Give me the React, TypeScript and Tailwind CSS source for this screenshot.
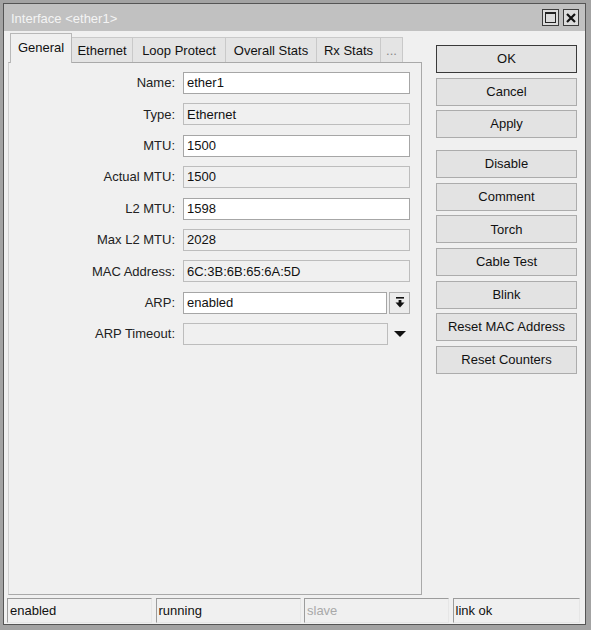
import React from "react";

const font = "font-['Liberation_Sans',Arial,sans-serif]";

type Field = { label: string; value: string; editable: boolean; kind?: "select" | "dropdown" };

const fields: Field[] = [
  { label: "Name:", value: "ether1", editable: true },
  { label: "Type:", value: "Ethernet", editable: false },
  { label: "MTU:", value: "1500", editable: true },
  { label: "Actual MTU:", value: "1500", editable: false },
  { label: "L2 MTU:", value: "1598", editable: true },
  { label: "Max L2 MTU:", value: "2028", editable: false },
  { label: "MAC Address:", value: "6C:3B:6B:65:6A:5D", editable: false },
  { label: "ARP:", value: "enabled", editable: true, kind: "select" },
  { label: "ARP Timeout:", value: "", editable: false, kind: "dropdown" },
];

const tabs = [
  { name: "General", w: "w-[62px]" },
  { name: "Ethernet", w: "w-[61px]" },
  { name: "Loop Protect", w: "w-[93px]" },
  { name: "Overall Stats", w: "w-[91px]" },
  { name: "Rx Stats", w: "w-[64px]" },
  { name: "...", w: "w-[22px]" },
];

const buttons1 = ["OK", "Cancel", "Apply"];
const buttons2 = ["Disable", "Comment", "Torch", "Cable Test", "Blink", "Reset MAC Address", "Reset Counters"];

function Btn({ label, primary }: { label: string; primary?: boolean }) {
  return (
    <div
      className={
        "h-[28px] w-[141px] flex items-center justify-center bg-[#e3e3e3] text-[#111] border " +
        (primary ? "border-[#3a3a3a]" : "border-[#acacac]")
      }
    >
      {label}
    </div>
  );
}

function Input({ value, editable, w }: { value: string; editable: boolean; w: string }) {
  return (
    <div
      className={
        "h-[22px] " +
        w +
        " flex items-center pl-[3px] border text-[#111] " +
        (editable ? "bg-white border-[#a6a6a6]" : "bg-[#f0f0f0] border-[#bdbdbd]")
      }
    >
      {value}
    </div>
  );
}

export default function App() {
  return (
    <div className={"w-[591px] h-[630px] bg-[#a3a3a3] pt-[3px] pl-[3px] pr-[5px] pb-[5px] text-[13px] " + font}>
      <div className="h-full border border-[#555555] flex flex-col bg-[#f0f0f0]">
        {/* Title bar */}
        <div className="h-[27px] bg-[#c1c1c1] flex items-center pl-[7px] pr-[6px]">
          <span className="text-[#f4f4f4] flex-1 pt-[2px]">Interface &lt;ether1&gt;</span>
          <div className="flex gap-[4px] items-center">
            <div className="w-[17px] h-[17px] border border-[#3c3c3c] bg-[#dcdcdc] flex items-center justify-center">
              <svg width="11" height="11" viewBox="0 0 11 11">
                <rect x="0.5" y="0.5" width="10" height="10" fill="none" stroke="#222" strokeWidth="1" />
                <rect x="0" y="0" width="11" height="2" fill="#222" />
              </svg>
            </div>
            <div className="w-[16px] h-[17px] border border-[#3c3c3c] bg-[#dcdcdc] flex items-center justify-center">
              <svg width="10" height="10" viewBox="0 0 10 10">
                <path d="M1 1 L9 9 M9 1 L1 9" stroke="#111" strokeWidth="2.2" />
              </svg>
            </div>
          </div>
        </div>

        {/* Body */}
        <div className="flex-1 flex flex-col pt-[2px]">
          <div className="flex-1 flex pl-[4px]">
            {/* Left tab area */}
            <div className="w-[414px] flex flex-col">
              <div className="h-[29px] flex items-end pl-[2px] relative z-10">
                {tabs.map((t, i) =>
                  i === 0 ? (
                    <div
                      key={t.name}
                      className={
                        t.w +
                        " h-[30px] -mb-[1px] bg-[#f0f0f0] border-l border-t border-r border-[#b8b8b8] flex items-center justify-center text-[#111] pb-[1px]"
                      }
                    >
                      {t.name}
                    </div>
                  ) : (
                    <div
                      key={t.name}
                      className={
                        t.w +
                        " h-[25px] bg-[#e4e4e4] border-t border-r border-[#c9c9c9] flex items-center justify-center pt-[2px] " +
                        (t.name === "..." ? "text-[#888]" : "text-[#111]")
                      }
                    >
                      {t.name}
                    </div>
                  )
                )}
              </div>
              <div className="flex-1 border border-[#a9a9a9] border-l-[#d0d0d0] bg-[#f0f0f0] pt-[9px] flex flex-col gap-[9.4px]">
                {fields.map((f) => (
                  <div key={f.label} className="flex items-center h-[22px]">
                    <div className="w-[167px] text-right text-[#222] pr-[1px]">{f.label}</div>
                    <div className="ml-[7px] flex items-center">
                      {f.kind === "select" ? (
                        <>
                          <Input value={f.value} editable={true} w="w-[204px]" />
                          <div className="ml-[2px] w-[21px] h-[22px] border border-[#b0b0b0] bg-[#ececec] flex items-center justify-center">
                            <svg width="10" height="11" viewBox="0 0 10 11">
                              <rect x="1" y="0" width="8" height="1.6" fill="#111" />
                              <rect x="3.6" y="3" width="2.8" height="3" fill="#111" />
                              <polygon points="0.5,5.5 9.5,5.5 5,10.5" fill="#111" />
                            </svg>
                          </div>
                        </>
                      ) : f.kind === "dropdown" ? (
                        <>
                          <Input value="" editable={false} w="w-[205px]" />
                          <div className="ml-[1px] w-[21px] h-[22px] flex items-center justify-center">
                            <svg width="12" height="6" viewBox="0 0 12 6">
                              <polygon points="0,0 12,0 6,6" fill="#111" />
                            </svg>
                          </div>
                        </>
                      ) : (
                        <Input value={f.value} editable={f.editable} w="w-[227px]" />
                      )}
                    </div>
                  </div>
                ))}
              </div>
            </div>

            {/* Right buttons */}
            <div className="ml-[14px] pt-[12px] flex flex-col">
              <div className="flex flex-col gap-[4.6px]">
                {buttons1.map((b, i) => (
                  <Btn key={b} label={b} primary={i === 0} />
                ))}
              </div>
              <div className="mt-[12px] flex flex-col gap-[4.6px]">
                {buttons2.map((b) => (
                  <Btn key={b} label={b} />
                ))}
              </div>
            </div>
          </div>

          {/* Status bar */}
          <div className="h-[25px] mt-[3px] mb-[1px] flex gap-[3.5px] pl-[3px] pr-[5px]">
            {[
              { t: "enabled", c: "text-[#111]", w: "w-[145px]" },
              { t: "running", c: "text-[#111]", w: "w-[145px]" },
              { t: "slave", c: "text-[#a9a9a9]", w: "w-[145px]" },
              { t: "link ok", c: "text-[#111]", w: "flex-1" },
            ].map((s) => (
              <div
                key={s.t}
                className={
                  s.w +
                  " h-full border-l border-t border-[#9c9c9c] border-r border-r-[#e6e6e6] border-b border-b-[#e6e6e6] flex items-center pl-[2px] " +
                  s.c
                }
              >
                {s.t}
              </div>
            ))}
          </div>
        </div>
      </div>
    </div>
  );
}
